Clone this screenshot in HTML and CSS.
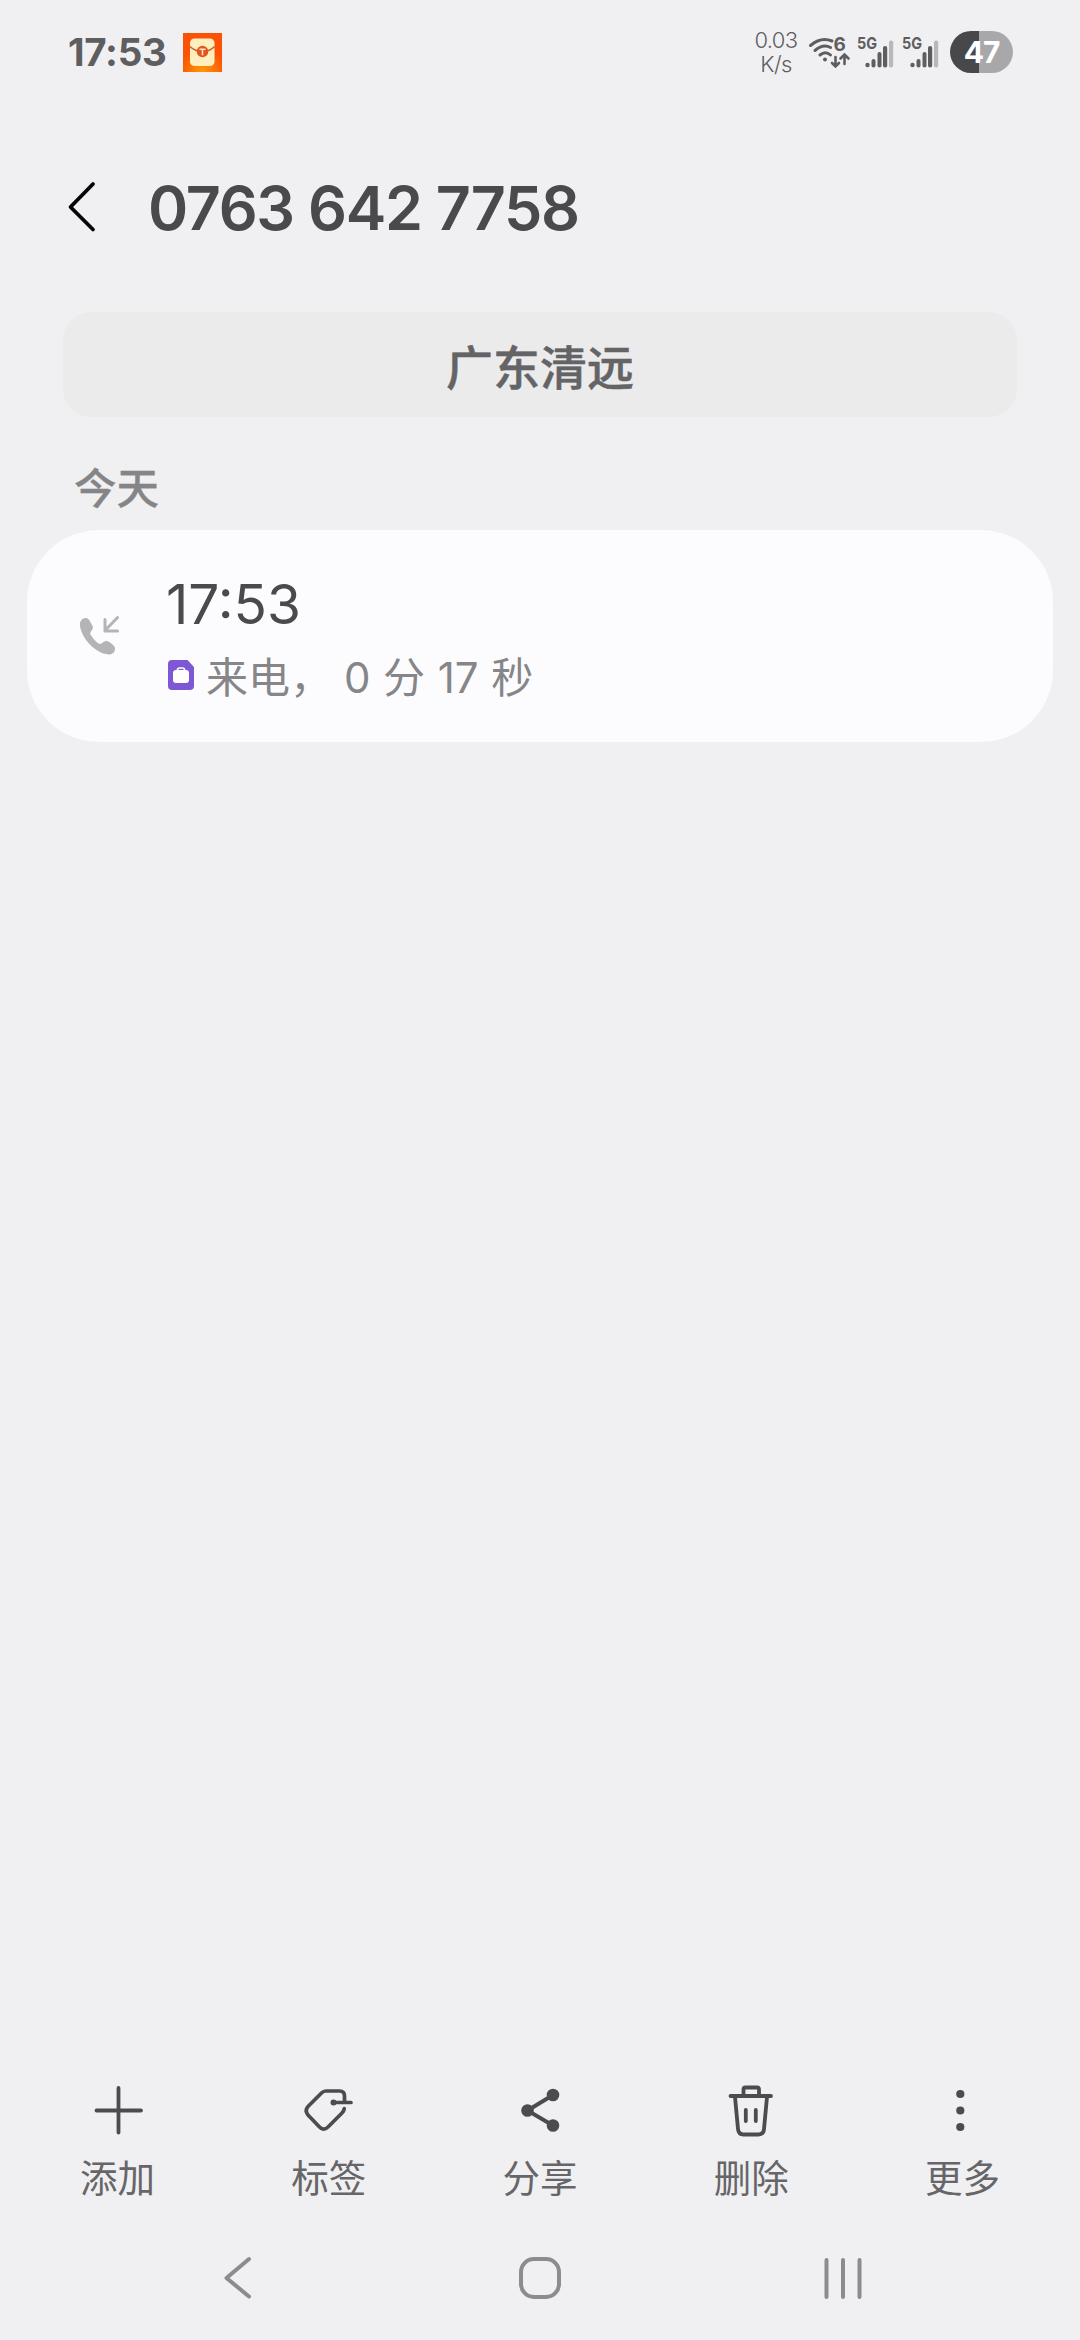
FILE: index.html
```html
<!DOCTYPE html>
<html lang="zh-CN">
<head>
<meta charset="utf-8">
<title>通话记录</title>
<link rel="stylesheet" href="styles.css">
</head>
<body>
<div class="screen">
  <header class="status">
    <span class="clock">17:53</span>
    <svg class="app-badge" width="39" height="39" viewBox="0 0 39 39">
      <defs>
        <radialGradient id="glow" cx=".5" cy="1" r=".6"><stop offset="0" stop-color="#ff9a08"/><stop offset="1" stop-color="#fb5206"/></radialGradient>
      </defs>
      <rect width="39" height="39" fill="url(#glow)"/>
      <rect x="7" y="5.500" width="24.500" height="27.500" rx="4.500" fill="#ffefbf"/>
      <path d="M7 13.500Q12 18.500 19.500 18.500T31.500 13.500" fill="none" stroke="#c9622c" stroke-width="1.600"/>
      <circle cx="19.500" cy="18.500" r="5.800" fill="#e2561e"/>
      <path d="M16.500 16.300h6M19.500 16.300v6" fill="none" stroke="#ffe9c8" stroke-width="1.500"/>
    </svg>
    <div class="status-right">
      <div class="speed"><span>0.03</span><span>K/s</span></div>
      <svg class="wifi" width="42" height="42" viewBox="0 0 42 42" fill="none" stroke="#5e5e60" stroke-linecap="round">
        <path d="M1.500 12.500Q12 3.500 23 8" stroke-width="3"/>
        <path d="M6 17.500Q14 10.500 21.500 14.500" stroke-width="3"/>
        <path d="M11 22Q16.500 17.500 21.500 22" stroke-width="3"/>
        <circle cx="16" cy="26.500" r="2" fill="#5e5e60" stroke="none"/>
        <path d="M26.500 24v9M23 30l3.500 3.500L30 30M35.500 31v-9M31.500 25.500l4-4 4 4" stroke-width="2.600"/>
        <text class="wifi-six" x="24.500" y="17.500">6</text>
      </svg>
      <svg class="signal" width="38" height="42" viewBox="0 0 38 42">
        <text class="net" x="0" y="15.500" textLength="20" lengthAdjust="spacingAndGlyphs">5G</text>
        <g fill="#5e5e60"><circle cx="10.500" cy="32" r="2.200"/><rect x="14.500" y="26" width="4" height="8.500" rx="2"/><rect x="20.500" y="19" width="4" height="15.500" rx="2"/><rect x="26" y="13" width="4.200" height="21.500" rx="2"/></g>
        <rect x="32" y="7.500" width="4.200" height="27" rx="2" fill="#b8b8ba"/>
      </svg>
      <svg class="signal second" width="38" height="42" viewBox="0 0 38 42">
        <text class="net" x="0" y="15.500" textLength="20" lengthAdjust="spacingAndGlyphs">5G</text>
        <g fill="#5e5e60"><circle cx="10.500" cy="32" r="2.200"/><rect x="14.500" y="26" width="4" height="8.500" rx="2"/><rect x="20.500" y="19" width="4" height="15.500" rx="2"/><rect x="26" y="13" width="4.200" height="21.500" rx="2"/></g>
        <rect x="32" y="7.500" width="4.200" height="27" rx="2" fill="#b8b8ba"/>
      </svg>
      <div class="battery">47</div>
    </div>
  </header>

  <div class="title-bar">
    <svg width="30" height="50" viewBox="0 0 30 50" fill="none" stroke="#050505" stroke-width="3.800" stroke-linecap="round" stroke-linejoin="round"><path d="M26 1L3.500 24L26 46.500"/></svg>
    <h1>0763 642 7758</h1>
  </div>

  <div class="region">广东清远</div>
  <h2 class="day">今天</h2>

  <section class="card">
    <svg class="call" width="42" height="42" viewBox="0 0 42 42" fill="#b4b4b6">
      <path d="M6 2C2 3 .5 6 1 10C3 23 16 37 29.500 38.500C33 38.500 35.500 36.500 36 33.500C36.500 31 34.500 29 31 26.500C28.500 24.500 26.500 24.500 24.500 26C22.500 28 21 28.500 19.500 27.500C16.500 25.500 13.500 22 11.500 18.500C10.800 17 11.500 16 13 14C14.300 12 14.200 11 13 9L10.500 4.500C9.500 2.500 8 1.600 6 2Z"/>
      <path d="M38.500 1.500L26 14.500M26 3.500v11.500h12.500" fill="none" stroke="#b4b4b6" stroke-width="3" stroke-linecap="round" stroke-linejoin="round"/>
    </svg>
    <div class="call-text">
      <div class="call-time">17:53</div>
      <div class="call-detail">
        <svg width="26" height="30" viewBox="0 0 26 30"><path d="M4 0H19.500L26 7V26Q26 30 22 30H4Q0 30 0 26V4Q0 0 4 0Z" fill="#7e57d4"/><rect x="5" y="10" width="16" height="13" rx="3" fill="#fff"/><path d="M9.500 11V10Q9.500 8 11.500 8H14.500Q16.500 8 16.500 10V11" fill="none" stroke="#fff" stroke-width="1.700"/></svg>
        <span class="detail-text"><span class="kind">来电，</span><span class="length">0 分 17 秒</span></span>
      </div>
    </div>
  </section>

  <nav class="actions">
    <div class="action">
      <svg width="56" height="56" viewBox="0 0 56 56" fill="none" stroke="#4c4c4e" stroke-width="3.800" stroke-linecap="round"><path d="M28.500 6v44.500M6.500 28.500H51"/></svg>
      <span>添加</span>
    </div>
    <div class="action">
      <svg width="56" height="56" viewBox="0 0 56 56" fill="none" stroke="#4c4c4e" stroke-width="4" stroke-linecap="round" stroke-linejoin="round"><path d="M43.500 19V14Q43.500 9 38.500 9H25Q22.500 9 20.500 11L7 24.500Q3.500 28.500 7 33L18 44.500Q22.500 49.500 27 45L41 31Q43 29 43.300 26.500M33 20.500H50" stroke-width="3.700"/><circle cx="32.500" cy="20.500" r="3" fill="#4c4c4e" stroke="none"/></svg>
      <span>标签</span>
    </div>
    <div class="action">
      <svg width="56" height="56" viewBox="0 0 56 56" fill="#4c4c4e"><path d="M41 13L15.500 28.500L41 43.500" fill="none" stroke="#4c4c4e" stroke-width="4"/><circle cx="15.500" cy="28.500" r="6.300"/><circle cx="41" cy="13" r="6.300"/><circle cx="41" cy="43.500" r="6.300"/></svg>
      <span>分享</span>
    </div>
    <div class="action">
      <svg width="56" height="56" viewBox="0 0 56 56" fill="none" stroke="#4c4c4e" stroke-width="3.800" stroke-linecap="round" stroke-linejoin="round"><path d="M7.500 14H48M20.500 13V7.500Q20.500 5.500 22.500 5.500H34Q36 5.500 36 7.500V13M12 15L15 47Q15.500 52.500 20.500 52.500H35.500Q40.500 52.500 41 47L44 15M22.800 28V39M32.800 28V39"/></svg>
      <span>删除</span>
    </div>
    <div class="action">
      <svg width="56" height="56" viewBox="0 0 56 56" fill="#4c4c4e"><circle cx="26.300" cy="12" r="4.100"/><circle cx="26.300" cy="28.500" r="4.100"/><circle cx="26.300" cy="45" r="4.100"/></svg>
      <span>更多</span>
    </div>
  </nav>

  <footer class="system-nav">
    <svg width="50" height="46" viewBox="0 0 50 46"><path d="M37 4L14.500 23L37 41.500"/></svg>
    <svg width="50" height="46" viewBox="0 0 50 46"><rect x="6" y="4" width="38" height="38" rx="13"/></svg>
    <svg width="50" height="46" viewBox="0 0 50 46"><path d="M8.500 5v37M25 5v37M41.500 5v37"/></svg>
  </footer>
</div>
</body>
</html>
```

FILE: styles.css
```css
* { box-sizing: border-box; }
body { margin: 0; background: #f0f0f2; font-family: Inter, "Noto Sans CJK SC", sans-serif; color: #4a4a4c; }
svg { display: block; flex: none; overflow: visible; }
h1, h2 { margin: 0; }
.screen { width: 1080px; height: 2340px; display: flex; flex-direction: column; overflow: hidden; }

.status { height: 104px; padding: 0 67px; display: flex; align-items: center; color: #5e5e60; }
.clock { width: 116px; padding-left: 1px; font-size: 38.5px; font-weight: 700; line-height: 48px; letter-spacing: -.3px; white-space: nowrap; }
.app-badge { margin-top: 1px; }
.status-right { margin-left: auto; display: flex; align-items: center; }
.speed { display: flex; flex-direction: column; align-items: center; width: 44px; margin-right: 11px; font-size: 22px; line-height: 24px; font-weight: 300; letter-spacing: -.6px; }
.wifi { margin-right: 6px; margin-top: 3px; }
.wifi-six { font-size: 19px; font-weight: 700; fill: #5e5e60; stroke: none; }
.net { font-size: 16.5px; font-weight: 700; fill: #5e5e60; }
.signal { margin-right: 7px; margin-top: 3px; }
.signal.second { margin-right: 10px; }
.battery { width: 63px; height: 42px; border-radius: 21px; background: linear-gradient(90deg, #48484a 29px, #a8a8aa 29px); color: #fff; font-size: 30px; font-weight: 700; line-height: 42px; letter-spacing: -1px; text-align: center; }

.title-bar { height: 208px; padding: 0 67px; display: flex; align-items: center; gap: 51px; }
.title-bar h1 { font-size: 61px; font-weight: 600; line-height: 70px; letter-spacing: -1.3px; white-space: nowrap; }

.region { height: 105px; margin: 0 63px; border-radius: 28px; background: #ebebec; color: #646466; font-family: "Noto Sans CJK SC", sans-serif; font-size: 47px; font-weight: 500; -webkit-text-stroke: .5px #646466; line-height: 105px; text-align: center; }
.day { height: 113px; padding-left: 74px; font-family: "Noto Sans CJK SC", sans-serif; font-size: 42.5px; font-weight: 500; -webkit-text-stroke: .3px #858587; line-height: 138px; color: #858587; }

.card { height: 212px; margin: 0 27px; padding: 2px 52px 0; border-radius: 72px; background: #fcfcfe; display: flex; align-items: center; gap: 47px; }
.call-text { display: flex; flex-direction: column; gap: 8px; padding-top: 4px; }
.call-time { margin-left: -2px; font-size: 55px; line-height: 66px; }
.call-detail { display: flex; align-items: center; gap: 12px; font-size: 42px; line-height: 60px; color: #868688; white-space: nowrap; }
.call-detail svg { margin-bottom: 3px; }
.kind { font-family: "Noto Sans CJK SC", sans-serif; margin-right: 12px; }
.length { word-spacing: .8px; }

.actions { margin-top: auto; padding: 0 12px; height: 152px; display: grid; grid-template-columns: repeat(5, 1fr); }
.action { display: flex; flex-direction: column; align-items: center; gap: 10px; font-family: "Noto Sans CJK SC", sans-serif; font-size: 37.5px; line-height: 56px; color: #666668; }

.system-nav { height: 106px; padding: 0 212px; display: flex; align-items: flex-start; justify-content: space-between; }
.system-nav svg { margin-top: 21px; fill: none; stroke: #8c8c8e; stroke-width: 4; stroke-linecap: round; stroke-linejoin: round; }
```
